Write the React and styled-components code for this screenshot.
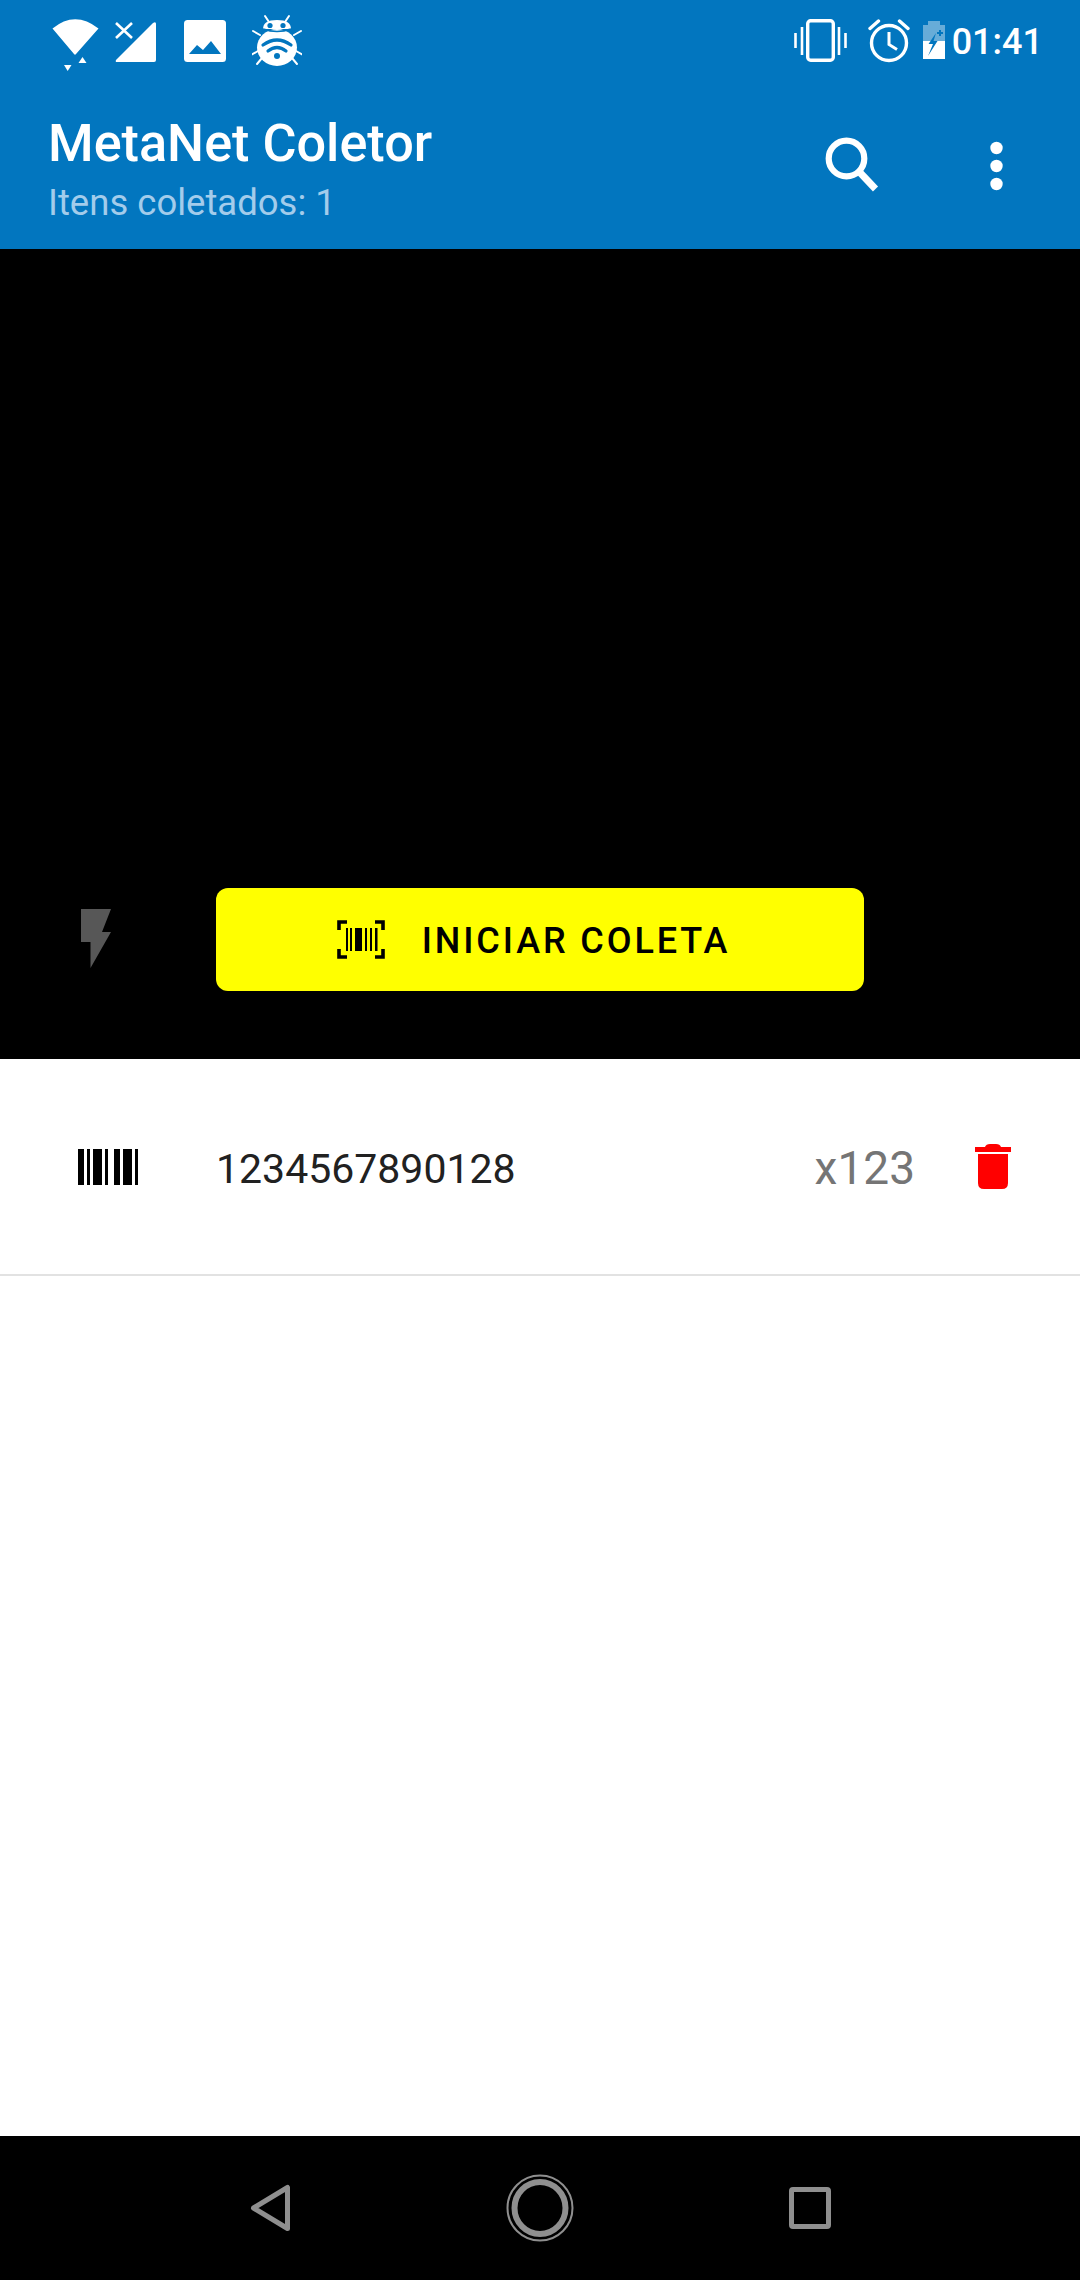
import React from 'react'
import styled, { createGlobalStyle } from 'styled-components'

const GlobalStyle = createGlobalStyle`
  html, body {
    margin: 0;
    padding: 0;
    background: #fff;
  }
  * {
    box-sizing: border-box;
  }
`

const Screen = styled.div`
  width: 1080px;
  height: 2280px;
  display: flex;
  flex-direction: column;
  font-family: Roboto, 'Liberation Sans', sans-serif;
  overflow: hidden;
`

const AppBar = styled.header`
  background: #0276bf;
  height: 249px;
  flex: none;
  display: flex;
  flex-direction: column;
`

const StatusBar = styled.div`
  height: 78px;
  display: flex;
  justify-content: space-between;
  padding: 0 37px 0 52px;
`

const StatusGroup = styled.div`
  display: flex;
  align-items: flex-start;
`

// viewBox of each status icon is in screen pixels, so x values read off the reference
const StatusIcon = styled.svg`
  height: 78px;
  width: ${(p) => p.$w}px;
  flex: none;
  margin-left: ${(p) => p.$gap || 0}px;
`

const Clock = styled.span`
  color: #fff;
  font-size: 36px;
  font-weight: 500;
  line-height: 36px;
  margin: 24px 0 0 7px;
`

const Toolbar = styled.div`
  flex: 1;
  display: flex;
  align-items: flex-start;
  padding-left: 48px;
`

const TitleBlock = styled.div`
  flex: 1;
  display: flex;
  flex-direction: column;
  padding-top: 36px;
`

const Title = styled.h1`
  margin: 0;
  color: #fff;
  font-size: 52.2px;
  font-weight: 500;
  line-height: 60px;
`

const Subtitle = styled.div`
  color: #a3cceb;
  font-size: 36.5px;
  line-height: 42px;
  margin-top: 8px;
`

const ToolIcon = styled.svg`
  flex: none;
  width: ${(p) => p.$w}px;
  height: 170px;
`

const Camera = styled.section`
  background: #000;
  height: 810px;
  flex: none;
  display: flex;
  align-items: flex-end;
  padding: 0 0 68px 81px;
`

const FlashIcon = styled.svg`
  width: 30px;
  height: 59px;
  flex: none;
  margin: 0 105px 23px 0;
`

const ScanButton = styled.button`
  width: 648px;
  height: 103px;
  border: 0;
  border-radius: 12px;
  background: #ffff00;
  color: #000;
  display: flex;
  align-items: center;
  justify-content: center;
  gap: 37px;
  padding: 3px 13px 0 0;
  font-family: inherit;
  font-size: 36px;
  font-weight: 500;
  letter-spacing: 2.9px;
`

const ScanIcon = styled.svg`
  width: 48px;
  height: 39px;
  flex: none;
  margin-top: -3px;
`

const List = styled.main`
  flex: 1;
  background: #fff;
`

const Row = styled.div`
  height: 217px;
  border-bottom: 2px solid #e2e2e2;
  display: flex;
  align-items: center;
  padding: 0 69px 0 78px;
`

const BarcodeIcon = styled.svg`
  width: 60px;
  height: 36px;
  flex: none;
  margin: 0 78px 0 0;
`

const Code = styled.span`
  flex: 1;
  font-size: 41px;
  color: #212121;
  margin-top: 4px;
`

const Quantity = styled.span`
  font-size: 46px;
  color: #757575;
  margin: 3px 60px 0 0;
`

const TrashIcon = styled.svg`
  width: 36px;
  height: 45px;
  flex: none;
`

const NavBar = styled.nav`
  background: #000;
  height: 144px;
  flex: none;
  display: flex;
  align-items: center;
  padding: 0 0 0 248px;
`

const NavIcon = styled.svg`
  flex: none;
  width: ${(p) => p.$w}px;
  height: 80px;
  margin-left: ${(p) => p.$gap || 0}px;
`

const barcodeBars = [
  [0, 6], [9, 3], [15, 9], [27, 3], [36, 6], [45, 9], [57, 3],
]

const scanBars = [
  [346, 2], [350, 2], [355, 7], [365, 2], [370, 2], [375, 2.5],
]

const App = () => {
  return (
    <Screen>
      <GlobalStyle />
      <AppBar>
        <StatusBar>
          <StatusGroup>
            <StatusIcon $w={48} viewBox="52 0 48 78" fill="#fff">
              <path d="M52.5 28.5 Q75 10 98.5 28.5 L76 54 Q75 55.5 74 54Z" />
              <path d="M82.5 57 L86.5 63 L78.5 63Z" />
              <path d="M64 65 L71.5 65 L67.7 71Z" />
            </StatusIcon>
            <StatusIcon $w={42} $gap={15} viewBox="115 0 42 78" fill="#fff">
              <path d="M116 60 L153 23 Q156 21 156 24 L156 60 Q156 62 154 62 L117 62 Q115 62 116 60Z" />
              <path d="M116 23 L132 38 M132 23 L116 38" stroke="#fff" strokeWidth="2.6" />
            </StatusIcon>
            <StatusIcon $w={42} $gap={27} viewBox="184 0 42 78">
              <rect x="184" y="20" width="42" height="42" rx="3.5" fill="#fff" />
              <path d="M189 54 L197 45 L203 50 L211 41 L221 54Z" fill="#0276bf" />
            </StatusIcon>
            <StatusIcon $w={50} $gap={26} viewBox="252 0 50 78">
              <g stroke="#fff" strokeWidth="2" strokeLinecap="round">
                <path d="M269 22 L265 16 M285 22 L289 16" />
                <path d="M260 35 L253 31 M294 35 L301 31" />
                <path d="M258 51 L251 55 M296 51 L303 55" />
                <path d="M262 58 L257 64 M292 58 L297 64" />
              </g>
              <path d="M263 29 Q263 20 277 20 Q291 20 291 29Z" fill="#fff" />
              <ellipse cx="277" cy="47.5" rx="20" ry="18.5" fill="#fff" />
              <circle cx="270" cy="25.5" r="2.6" fill="#0276bf" />
              <circle cx="283" cy="25.5" r="2.6" fill="#0276bf" />
              <path d="M263 29 Q277 34 291 29" fill="none" stroke="#0276bf" strokeWidth="1.6" />
              <g fill="none" stroke="#0276bf" strokeLinecap="round">
                <path d="M263 45 Q277 35 291 45" strokeWidth="3.2" />
                <path d="M268 51 Q277 44 286 51" strokeWidth="3.2" />
              </g>
              <circle cx="277" cy="56" r="3" fill="#0276bf" />
            </StatusIcon>
          </StatusGroup>
          <StatusGroup>
            <StatusIcon $w={54} viewBox="795 0 54 78" fill="none" stroke="#fff">
              <rect x="808.7" y="20.7" width="25.6" height="39.6" rx="3" strokeWidth="3.4" />
              <path d="M796.5 33 V48 M803 27 V55 M840 27 V55 M846.5 33 V48" strokeWidth="2.6" />
            </StatusIcon>
            <StatusIcon $w={42} $gap={20} viewBox="869 0 42 78" fill="none" stroke="#fff" strokeWidth="3.4">
              <circle cx="890" cy="43" r="17.5" />
              <path d="M871 28.5 L879.5 21 M909 28.5 L900.5 21" strokeLinecap="round" />
              <path d="M890 32 V44.5 L898 49.5" strokeWidth="3" />
            </StatusIcon>
            <StatusIcon $w={22} $gap={13} viewBox="924 0 22 78">
              <path d="M924 25 H929 V21 H941 V25 H946 V41 H924Z" fill="#fff" fillOpacity="0.4" />
              <path d="M924 41 H946 V59 H924Z" fill="#fff" />
              <path d="M937 33 L929.5 44 L934 44 L929 56 L938.5 41 L934.5 41Z" fill="#0276bf" />
              <path d="M938 33 H944 M941 30 V36" stroke="#0276bf" strokeWidth="2" />
            </StatusIcon>
            <Clock>01:41</Clock>
          </StatusGroup>
        </StatusBar>
        <Toolbar>
          <TitleBlock>
            <Title>MetaNet Coletor</Title>
            <Subtitle>Itens coletados: 1</Subtitle>
          </TitleBlock>
          <ToolIcon $w={80} viewBox="810 78 80 170" fill="none" stroke="#fff">
            <circle cx="846.5" cy="158.5" r="17.8" strokeWidth="6.2" />
            <path d="M859.5 172 L875.5 189" strokeWidth="7" />
          </ToolIcon>
          <ToolIcon $w={190} viewBox="890 78 190 170" fill="#fff">
            <circle cx="996.5" cy="148" r="6.2" />
            <circle cx="996.5" cy="166" r="6.2" />
            <circle cx="996.5" cy="184" r="6.2" />
          </ToolIcon>
        </Toolbar>
      </AppBar>

      <Camera>
        <FlashIcon viewBox="81 909 30 59">
          <path d="M81 909 H111 L102 932 H111 L90.5 968 V942 H81Z" fill="#575757" />
        </FlashIcon>
        <ScanButton>
          <ScanIcon viewBox="337 920 48 39">
            <path
              d="M347 922 H339 V930 M375 922 H383 V930 M347 957 H339 V949 M375 957 H383 V949"
              fill="none"
              stroke="#000"
              strokeWidth="3.6"
            />
            {scanBars.map(([x, w]) => (
              <rect key={x} x={x} y="928" width={w} height="23" fill="#000" />
            ))}
          </ScanIcon>
          INICIAR COLETA
        </ScanButton>
      </Camera>

      <List>
        <Row>
          <BarcodeIcon viewBox="0 0 60 36">
            {barcodeBars.map(([x, w]) => (
              <rect key={x} x={x} y="0" width={w} height="36" fill="#000" />
            ))}
          </BarcodeIcon>
          <Code>1234567890128</Code>
          <Quantity>x123</Quantity>
          <TrashIcon viewBox="0 0 36 45" fill="#f00">
            <path d="M0 3 H10 Q11 0 15 0 H21 Q25 0 26 3 H36 V8 H0Z" />
            <path d="M3 10 H33 V39 Q33 45 27 45 H9 Q3 45 3 39Z" />
          </TrashIcon>
        </Row>
      </List>

      <NavBar>
        <NavIcon $w={44} viewBox="248 2168 44 80" fill="none" stroke="#8f8f8f" strokeWidth="5" strokeLinejoin="round">
          <path d="M287.5 2187.5 V2228.5 L253.5 2208Z" />
        </NavIcon>
        <NavIcon $w={70} $gap={213} viewBox="505 2168 70 80" fill="none" stroke="#8f8f8f">
          <ellipse cx="540" cy="2208" rx="32.5" ry="32.5" strokeWidth="2" />
          <ellipse cx="540" cy="2208" rx="25.5" ry="26" strokeWidth="6" />
        </NavIcon>
        <NavIcon $w={46} $gap={212} viewBox="787 2168 46 80" fill="none" stroke="#8f8f8f" strokeWidth="5" strokeLinejoin="round">
          <rect x="791.5" y="2189.5" width="37" height="37" rx="1.5" />
        </NavIcon>
      </NavBar>
    </Screen>
  )
}

export default App
